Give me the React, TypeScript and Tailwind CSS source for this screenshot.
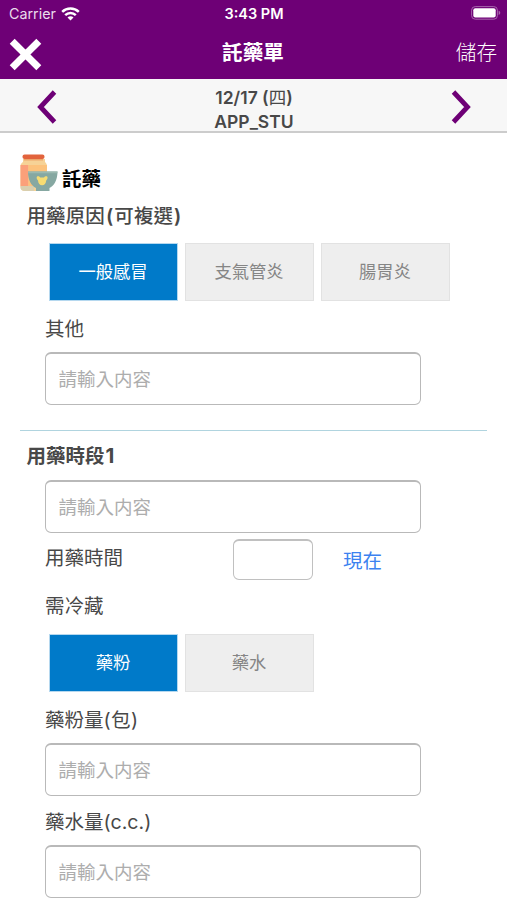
import { useState } from "react"

type ChoiceProps = {
    options: string[]
    initial: string
}

type FieldProps = {
    label?: string
}

function Wifi() {
    return (
        <svg width="19" height="14" viewBox="0 0 19 14" fill="none" stroke="white" strokeWidth="2.5">
            <path d="M1.2 4.8C5.8 0.3 13.2 0.3 17.8 4.8" />
            <path d="M4.2 8.1C7.2 5.2 11.8 5.2 14.8 8.1" />
            <path d="M9.5 13.4L6.5 10.4C8.2 9 10.8 9 12.5 10.4Z" fill="white" stroke="none" />
        </svg>
    )
}

function Battery() {
    return (
        <svg width="30" height="14" viewBox="0 0 30 14" fill="none">
            <rect x="0.6" y="0.6" width="25.8" height="12.6" rx="3.6" stroke="#a765ad" strokeWidth="1" />
            <rect x="2.3" y="2.3" width="22.4" height="9.2" rx="2" fill="white" />
            <path d="M27.6 4.8C29.8 5.4 29.8 8.4 27.6 9Z" fill="#a765ad" />
        </svg>
    )
}

function MedicineIcon() {
    return (
        <svg width="38" height="38" viewBox="0 0 38 38">
            <path d="M3 5H25V8C26 9 27 10 27 12V34C27 36 25 37 23 37H5C2 37 0.5 35.5 0.5 33V12C0.5 10 1.5 9 3 8Z" fill="#f6d296" />
            <path d="M0.5 11H8.5V32H0.5Z" fill="#fba07a" />
            <path d="M8.5 11H27V32H8.5Z" fill="#fcc27c" />
            <path d="M0.5 32H14V37H5C2 37 0.5 35.5 0.5 33Z" fill="#d9cfaf" />
            <rect x="2.5" y="0.5" width="22" height="4.5" rx="2" fill="#e2633c" />
            <rect x="4" y="5" width="19" height="1.5" fill="#eda66a" />
            <path d="M8 17.5H37.5C37.5 26 34 32 29.5 34V37H16V34C11 31.5 8 26 8 17.5Z" fill="#86a8a2" />
            <path d="M8 17.5H37.5L37.3 19.2H8.2Z" fill="#9bb9b0" />
            <path d="M17 22.5C18 21.7 19.5 22.3 20.2 23.5H24C24.7 22.3 26.2 21.7 27.2 22.5C28 23.7 27.4 25.5 26.2 26.5C26 29.3 24.4 31.3 22.1 31.3C19.8 31.3 18.2 29.3 18 26.5C16.8 25.5 16.2 23.7 17 22.5Z" fill="#f7dc72" />
        </svg>
    )
}

function Choices(props: ChoiceProps) {
    const [selected, setSelected] = useState(props.initial)

    return (
        <div className="flex h-[58px] gap-[7px] pl-[48.5px] text-[17.3px]">
            {props.options.map(option => (
                <button
                    key={option}
                    onClick={() => setSelected(option)}
                    className={option === selected
                        ? "w-[129px] border border-[#b5d8ef] bg-[#007ac9] text-white"
                        : "w-[129px] border border-[#e2e2e2] bg-[#eeeeee] text-[#858585]"}
                >
                    {option}
                </button>
            ))}
        </div>
    )
}

function Field(props: FieldProps) {
    return (
        <input
            aria-label={props.label}
            placeholder="請輸入内容"
            className="ml-[44.5px] block h-[53px] w-[376.5px] rounded-[6px] border border-t-2 border-[#b9b9b9] bg-white px-[13px] text-[18.5px] placeholder:text-[#adadad]"
        />
    )
}

function App() {
    return (
        <div className="h-[900px] w-[507px] overflow-hidden bg-white font-['Inter','Noto_Sans_CJK_TC',sans-serif] text-[19.5px] leading-6 text-[#484848]">
            <header className="h-[79px] bg-[#6e0076] text-white">
                <div className="grid h-[27px] grid-cols-3 items-center pl-[9px] pr-[6px] text-[14.3px]">
                    <div className="flex items-center gap-[5px] text-[#eadcec]">
                        <span>Carrier</span>
                        <Wifi />
                    </div>
                    <span className="-ml-[2px] text-center text-[14.5px] font-semibold">3:43 PM</span>
                    <div className="-mt-px flex justify-end"><Battery /></div>
                </div>
                <div className="grid h-[52px] grid-cols-3 items-center pl-[9px] pr-[10px] text-[20.6px]">
                    <button aria-label="close">
                        <svg className="mt-[2px]" width="33" height="33" viewBox="0 0 33 33" stroke="white" strokeWidth="7" strokeLinejoin="round">
                            <path d="M3.2 3.2L29.8 29.8M29.8 3.2L3.2 29.8" />
                        </svg>
                    </button>
                    <h1 className="text-center font-bold">託藥單</h1>
                    <button className="text-right font-light">儲存</button>
                </div>
            </header>

            <div className="flex h-[54px] items-center justify-between border-b-2 border-[#cccccc] bg-[#f7f7f7] pl-[37px] pr-[36px]">
                <button aria-label="previous day" className="pt-[3px]">
                    <svg width="20" height="34" viewBox="0 0 20 34" fill="none" stroke="#6e0076" strokeWidth="4.8">
                        <path d="M17.5 2L3.5 17L17.5 32" />
                    </svg>
                </button>
                <div className="pt-[9px] text-center text-[17.5px] font-semibold">
                    <p>12/17 (<span className="font-normal">四</span>)</p>
                    <p>APP_STU</p>
                </div>
                <button aria-label="next day" className="pt-[3px]">
                    <svg width="20" height="34" viewBox="0 0 20 34" fill="none" stroke="#6e0076" strokeWidth="4.8">
                        <path d="M2.5 2L16.5 17L2.5 32" />
                    </svg>
                </button>
            </div>

            <main>
                <div className="flex h-[59px] items-end gap-1 pl-5 font-bold text-black">
                    <MedicineIcon />
                    <h2 className="pb-px">託藥</h2>
                </div>
                <h3 className="h-[51px] pl-[26.5px] pt-[12px] font-medium tracking-[0.1px]">
                    用藥原因<span className="px-px font-semibold">(</span>可複選<span className="pl-px font-semibold">)</span>
                </h3>
                <Choices options={["一般感冒", "支氣管炎", "腸胃炎"]} initial="一般感冒" />
                <p className="h-[51px] pl-[45px] pt-[16px]">其他</p>
                <Field label="其他" />
                <div className="mx-5 mt-[25px] h-px bg-[#b0d4df]" />

                <h3 className="h-[49px] pl-[26.5px] pt-[13px] font-bold">用藥時段<span className="pl-px text-[20.5px]">1</span></h3>
                <Field label="用藥時段1" />
                <div className="flex h-[52px] pl-[45px] pt-[6px]">
                    <p className="w-[188px] pt-[7px]">用藥時間</p>
                    <input
                        aria-label="用藥時間"
                        className="h-[41px] w-[80px] rounded-[6px] border border-t-2 border-[#c0c0c0] px-2"
                    />
                    <button className="ml-[30px] mt-[10px] h-6 text-[#3c82f0]">現在</button>
                </div>
                <p className="h-[49px] pl-[45px] pt-[9px]">需冷藏</p>
                <Choices options={["藥粉", "藥水"]} initial="藥粉" />
                <p className="h-[51px] pl-[45px] pt-[16px]">藥粉量<span className="tracking-wide">(包)</span></p>
                <Field label="藥粉量" />
                <p className="h-[49px] pl-[45px] pt-[14px]">藥水量(c.c.)</p>
                <Field label="藥水量" />
            </main>
        </div>
    )
}

export default App
